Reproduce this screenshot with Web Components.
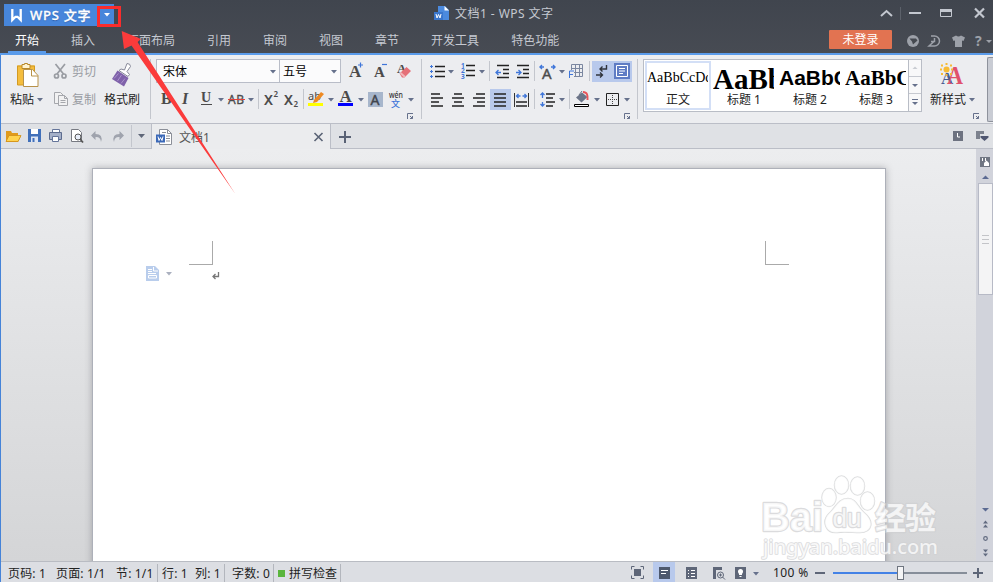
<!DOCTYPE html>
<html lang="zh-CN">
<head>
<meta charset="utf-8">
<title>文档1 - WPS 文字</title>
<style>
    body {
        margin: 0;
        overflow: hidden;
        font: 12px/16px "Noto Sans", "Noto Sans CJK SC", sans-serif;
        color: #222;
    }
</style>
</head>
<body>
<wps-app></wps-app>

<script>
// Every icon is drawn in a cell, most of them 24px high with the middle at y = 12
const A = 'font-family="Liberation Serif" fill="#4b4b4b"';
const lines = (list) => `<path stroke="#222" stroke-width="1.5" fill="none" d="${list.map(([x, y, w]) => `M${x} ${y}h${w}`).join('')}"/>`;

const icons = {
    none: '',
    caret: '<path d="M0 11h6l-3 3.4z" fill="#66718c"/>',
    launcher: '<path d="M.5 6V.5H6M3 5.500h2.500V3M3 3l2.500 2.500" fill="none" stroke="#66718c"/>',
    logo: '<path d="M1.300 0v11l3.200-3.200h2L9.700 11V0" fill="none" stroke="#fff" stroke-width="2.3"/>',
    doc: '<path d="M4 0h7l4 4v10H4z" fill="#4b8ade"/><path d="M10.500 0v4.500H15z" fill="#fff"/><path d="M0 6h9v8H0z" fill="#3a76cc"/><path d="M2 8l1 4 1.500-3.500L6 12l1-4" fill="none" stroke="#fff"/>',
    // window buttons
    fold: '<path d="M1 16l5.500-5 5.500 5" fill="none" stroke="#c3c7cf" stroke-width="2"/>',
    minimize: '<path d="M0 13h12" stroke="#c3c7cf" stroke-width="2"/>',
    restore: '<path d="M.5 9.500h11v7H.500z" fill="none" stroke="#c3c7cf"/><path d="M0 10.500h12" stroke="#c3c7cf" stroke-width="3"/>',
    close: '<path d="M1 8.500l9 9M10 8.500l-9 9" stroke="#c3c7cf" stroke-width="2.2"/>',
    globe: '<circle cx="6" cy="12" r="6" fill="#9da1a9"/><path d="M2.500 9.500h6.500l1.500 2-4.500 4-1-3z" fill="#454950"/>',
    swirl: '<path d="M3 7h3.500a5 5 0 0 1 0 10H1l5.500-5M6.500 9v3.500H3" fill="none" stroke="#9da1a9" stroke-width="1.500"/>',
    shirt: '<path d="M4 6.500q2.500 2 5 0l4 2-1.500 3.500-1.500-.5v6.500H3v-6.500L1.500 12 0 8.500z" fill="#9da1a9"/>',
    help: '<text x="0" y="16.500" font-size="14" font-weight="bold" fill="#9da1a9">?</text>',
    // clipboard
    paste: '<path d="M0 2.500h18V22H0z" fill="#f4bd3e"/><path d="M.5 3h17v19H.500z" fill="none" stroke="#d39a22"/><path d="M5 1.500h2.500V.500h3v1H13v4H5z" fill="#fff3cf" stroke="#b7882a"/><path d="M6.500 6.500h9l5.500 6v11H6.500z" fill="#fff" stroke="#b8924a"/><path d="M14.500 6.500v6.500H21" fill="none" stroke="#b8924a"/>',
    cut: '<g fill="none" stroke="#999ca2" stroke-width="1.700"><path d="M2.500 5l8 10M12 5l-8 10"/><circle cx="3.500" cy="17" r="2"/><circle cx="11" cy="17" r="2"/></g>',
    copy: '<g fill="#f1f1f2" stroke="#a5a7ac"><path d="M1.500 5.500h6l3 3v8h-9z"/><path d="M5.500 8.500h6l3 3v7h-9z"/><path d="M7.500 13.500h5M7.500 15.500h5M11.500 8.500v3h3" fill="none"/></g>',
    painter: '<path d="M15 .5q3.500 0 3.500 3L15 8.500l2.500 3-1.500 2L7 7.500l2-1.500 3.500 1z" fill="#fff" stroke="#888a9a"/><path d="M5.500 7.500l11 7.500-4.500 8.500L0 16z" fill="#7f62aa"/><path d="M2 15.500l4.500-5M5.500 18l4-6M9 20.500l4-5" stroke="#aa91cc"/>',
    // font
    grow: `<text x="0" y="18" font-size="17" font-weight="bold" ${A}>A</text><path d="M9 6h5M11.500 3.500v5" stroke="#3f76d9" stroke-width="1.200"/>`,
    shrink: `<text x="0" y="18" font-size="15" font-weight="bold" ${A}>A</text><path d="M8 5.500h5" stroke="#3f76d9" stroke-width="1.200"/>`,
    eraser: `<text x="0" y="13.500" font-size="13" font-weight="bold" ${A}>A</text><path d="M2.500 14.500l7-6.500 4.500 4-6.500 6.500H5z" fill="#e57078"/><path d="M3.500 14l4.500 4" stroke="#f2b6ba" stroke-width="2"/>`,
    bold: `<text x="0" y="17" font-size="16" font-weight="bold" ${A}>B</text>`,
    italic: `<text x="1" y="17" font-size="16" font-weight="bold" font-style="italic" ${A}>I</text>`,
    underline: `<text x="0" y="15" font-size="14" font-weight="bold" ${A}>U</text><path d="M0 17.500h11" stroke="#4b4b4b"/>`,
    strike: '<text x="0" y="17" font-size="12" fill="#4b4b4b" stroke="#4b4b4b" stroke-width=".3" textLength="16">AB</text><path d="M0 12.500h17" stroke="#e2413c"/>',
    sup: '<text x="0" y="17.500" font-size="14" font-weight="600" fill="#4b4b4b">X</text><text x="9.500" y="10" font-size="8" font-weight="600" fill="#4b4b4b">2</text>',
    sub: '<text x="0" y="17.500" font-size="14" font-weight="600" fill="#4b4b4b">X</text><text x="9.500" y="20" font-size="8" font-weight="600" fill="#4b4b4b">2</text>',
    marker: '<text x="0" y="13" font-size="11" fill="#4b4b4b">ab</text><path d="M6 13l7-8 3 2-7 8-4 1z" fill="#ee8a22"/><path d="M0 16h15v3H0z" fill="#ff0"/>',
    color: `<text x="1.500" y="14.500" font-size="17" font-weight="bold" ${A}>A</text><path d="M0 16h15v3H0z" fill="#00f"/>`,
    shade: '<path d="M0 5h15v15H0z" fill="#a7b6cc"/><text x="2.500" y="18" font-size="14" fill="#40444c" stroke="#40444c" stroke-width=".4">A</text>',
    pinyin: '<text x="0" y="10.500" font-size="8" font-weight="500" fill="#333" textLength="14" lengthAdjust="spacingAndGlyphs">wén</text><text x="2" y="20" font-size="9" font-weight="500" fill="#3f76d9">文</text>',
    // paragraph
    bullets: lines([[5, 7.500, 10], [5, 12.500, 10], [5, 17.500, 10]]) + '<path d="M0 7.500h3M1.500 6v3M0 12.500h3M1.500 11v3M0 17.500h3M1.500 16v3" stroke="#3f76d9"/>',
    numbers: lines([[5, 6.500, 9], [5, 11.500, 9], [5, 16.500, 9]]) + '<g font-size="6.500" font-weight="bold" fill="#3f76d9"><text y="8.500">1</text><text y="14">2</text><text y="19.500">3</text></g>',
    outdent: lines([[1, 6.500, 12], [7, 10.500, 6], [7, 14.500, 6], [1, 18.500, 12]]) + '<path d="M0 13.500h5M2.500 11L0 13.500 2.500 16" fill="none" stroke="#3f76d9" stroke-width="1.300"/>',
    indent: lines([[1, 6.500, 12], [7, 10.500, 6], [7, 14.500, 6], [1, 18.500, 12]]) + '<path d="M0 13.500h5M2.500 11L5 13.500 2.500 16" fill="none" stroke="#3f76d9" stroke-width="1.300"/>',
    scaleText: '<text x="2" y="20" font-size="15" fill="#4b4b4b" stroke="#4b4b4b" stroke-width=".4">A</text><path d="M0 8h4M2 6L0 8l2 2M11 8h4M13 6l2 2-2 2" fill="none" stroke="#3f76d9" stroke-width="1.400"/>',
    tableF: '<path d="M2.500 5.500h11v12h-11zM2.500 9.500h11M2.500 13.500h11M6.500 5v13M10.500 5v13" fill="none" stroke="#7b87a0"/><path d="M0 11h5v9H0z" fill="#ecedf0"/><path d="M.500 19v-7H5M0 15.500h4" fill="none" stroke="#3f76d9"/>',
    marks: '<path d="M14.500 6v4H8M10.500 7.500L8 10l2.500 2.500M4 16h6M8 13.500l2.500 2.500L8 18.500" fill="none" stroke="#30343c" stroke-width="1.400"/>',
    layout: '<path d="M3 4h16v16H3z" fill="#5f7cc4"/><path d="M5.500 6.500h11v11h-11z" fill="none" stroke="#fff"/><path d="M8 9.500h6M8 12h6M8 14.500h4" stroke="#fff"/>',
    left: lines([[0, 7, 9], [0, 11, 12], [0, 15, 8], [0, 19, 12]]),
    center: lines([[2, 7, 8], [0, 11, 12], [2, 15, 8], [0, 19, 12]]),
    right: lines([[3, 7, 9], [0, 11, 12], [4, 15, 8], [0, 19, 12]]),
    justify: lines([[4, 7, 12], [4, 11, 12], [4, 15, 12], [4, 19, 12]]),
    distribute: lines([[2, 15, 11], [2, 19, 11]]) + '<path d="M.500 6v14M14.500 6v14" stroke="#333"/><path d="M2.500 9h4M4.500 7L2.500 9l2 2M8.500 9h4M10.500 7l2 2-2 2" fill="none" stroke="#3f76d9" stroke-width="1.300"/>',
    spacing: lines([[6, 7, 9], [6, 11, 7], [6, 15, 9], [6, 19, 7]]) + '<path d="M2.500 6v5M.500 8l2-2 2 2M2.500 15v4M.500 17l2 2 2-2" fill="none" stroke="#3f76d9" stroke-width="1.300"/>',
    fill: '<path d="M8 5.500l5.500 4.500-6 5.500L2 10.500z" fill="#6b7488"/><path d="M5 8l3-4" stroke="#6b7488"/><path d="M9 5c4 0 5 3 4.500 8" fill="none" stroke="#e8545a" stroke-width="2"/><path d="M.500 17.500h14v2H.500z" fill="#fff" stroke="#000"/>',
    border: '<path d="M.500 6.500h12v12H.500z" fill="none" stroke="#222"/><path d="M6.500 8v10M2 12.500h10" stroke="#444" stroke-dasharray="1 1"/>',
    newStyle: '<text x="1" y="20.500" font-size="17" font-weight="bold" fill="#4a5e92" font-family="Liberation Serif">A</text><text x="7" y="20.500" font-size="25" font-weight="bold" fill="#e0526c" font-family="Liberation Serif" textLength="16" lengthAdjust="spacingAndGlyphs">A</text><g fill="#f7bb35"><circle cx="6.500" cy="6.500" r="3"/><path d="M5.500 0h2v2h-2zM5.500 11h2v2h-2zM0 5.500h2v2H0zM11 5.500h2v2h-2zM1 1.500h2v2H1zM10 1.500h2v2h-2zM1 10h2v2H1zM10 10h2v2h-2z"/></g>',
    scrollUp: '<path d="M3.500 9h5L6 6.500z" fill="#c9ccd2"/>',
    scrollDown: '<path d="M3 7h6L6 10z" fill="#66718c"/>',
    scrollMore: '<path d="M3 5.500h6" stroke="#66718c"/><path d="M3 8h6l-3 3z" fill="#66718c"/>',
    // quick access bar
    open: '<path d="M0 7h5l1 2h6v3h3l-3 6H0z" fill="#e09a1c"/><path d="M3 11.500h12L12 17.500H0z" fill="#ffd34f" stroke="#d08f18" stroke-width=".8"/>',
    save: '<path d="M0 5h13v13H0z" fill="#4170ba"/><path d="M3 5h7v5H3z" fill="#fff"/><path d="M3 12.500h7V18H3z" fill="#dfe6f4"/><path d="M4.500 14h2v4h-2z" fill="#4170ba"/>',
    print: '<path d="M3.500 5.500h7v3h-7z" fill="#fff" stroke="#65759a"/><path d="M.500 8.500h12v7H.500z" fill="#a5b0c8" stroke="#5d6c8e"/><path d="M3.500 12.500h6v5h-6z" fill="#fff" stroke="#65759a"/>',
    preview: '<path d="M.500 5.500h7l3 3v9H.500z" fill="#fff" stroke="#777a82"/><circle cx="7" cy="13" r="3" fill="#e8eefa" stroke="#555"/><path d="M9 15l3 3.500" stroke="#555" stroke-width="1.800"/>',
    undo: '<path d="M4.500 7L0 11.500 4.500 16v-3q5-.5 5.500 5 2.500-8-5.500-8z" fill="#9fa3ad"/>',
    redo: '<path d="M6.500 7L11 11.500 6.500 16v-3q-5-.5-5.500 5-2.500-8 5.500-8z" fill="#9fa3ad"/>',
    word: '<path d="M3.500.500h8l4 4v11h-12z" fill="#fff" stroke="#8b8f98"/><path d="M11.500.500v4h4M10 7h4M10 9.500h4M10 12h4M6 3.500h4" fill="none" stroke="#8b8f98"/><path d="M0 5.500h9v8H0z" fill="#3b69b8"/><path d="M2 7.500l1 4 1.500-3 1.500 3 1-4" fill="none" stroke="#fff"/>',
    closeTab: '<path d="M.500 8l8 8M8.500 8l-8 8" stroke="#596275" stroke-width="1.600"/>',
    plus: '<path d="M0 12h12M6 6v12" stroke="#596275" stroke-width="2"/>',
    clock: '<path d="M0 7h10v10H0z" fill="#6d7280"/><path d="M4.500 9v4H7" fill="none" stroke="#fff"/>',
    tabList: '<path d="M0 7h8v3H4v5H0z" fill="#7c818d"/><path d="M4.500 12h8v1.500l-4 3.500-4-3.500z" fill="#4f5670"/>',
    // scroll bar
    ruler: '<path d="M0 0h10v10H0z" fill="#707683"/><path d="M2.500 1v3M5.500 1v3" stroke="#fff"/><path d="M4 6l2.500-2.500L9 6v3H4z" fill="#fff"/>',
    up: '<path d="M0 4h7L3.500 .5z" fill="#5b6a92"/>',
    down: '<path d="M0 0h7L3.500 3.500z" fill="#5b6a92"/>',
    pageUp: '<path d="M1 3.500h5l-2.500-3zM1 7.500h5l-2.500-3z" fill="#626b80"/>',
    pageDown: '<path d="M1 .500h5l-2.500 3zM1 4.500h5l-2.500 3z" fill="#626b80"/>',
    ring: '<circle cx="3.500" cy="3.500" r="1.800" fill="none" stroke="#626b80" stroke-width="1.200"/>',
    // status bar
    full: '<path d="M3 8h7v7H3z" fill="#5e6678"/><path d="M.500 8.500v-3h3M9.500 5.500h3v3M12.500 14.500v3h-3M3.500 17.500h-3v-3" fill="none" stroke="#5e6678"/>',
    pageView: '<path d="M6 6h11v12H6z" fill="#4e596e"/><path d="M8 9.500h7M8 12.500h5" stroke="#fff"/>',
    outline: '<path d="M0 6h11v12H0z" fill="#5e6678"/><path d="M2 9.500h1M5 9.500h4M2 12.500h1M5 12.500h4M2 15.500h1M5 15.500h4" stroke="#fff"/>',
    web: '<path d="M0 6h9v3H0zM0 9h3v9H0z" fill="#5e6678"/><circle cx="7.500" cy="14" r="3" fill="none" stroke="#5e6678"/><path d="M6 14h3M7.500 12.500v3M9.500 16l2.500 2.500" stroke="#5e6678"/>',
    bulb: '<path d="M0 6h11v12H0z" fill="#5e6678"/><circle cx="5.500" cy="10.500" r="2.500" fill="#fff"/><path d="M4 12h3v2H4zM4.500 15h2v1h-2z" fill="#fff"/>',
    minus: '<path d="M0 12h10" stroke="#5e6678" stroke-width="2"/>',
    zoomIn: '<path d="M0 12h10M5 7v10" stroke="#5e6678" stroke-width="2"/>',
    // page
    paragraphTool: '<path d="M0 0h9l4 4v11H0z" fill="#b9cdec"/><path d="M7.500 1v4H12M2 3.500h4M2 5.500h4M2 7.500h8M2.500 9.500h8v2.500h-8z" fill="none" stroke="#fff"/>',
    enter: '<path d="M6.500 0v4.500H1M3.500 2L1 4.500 3.500 7" fill="none" stroke="#777" stroke-width="1.300"/>'
};

class WpsElement extends HTMLElement {
    constructor() {
        super();
        this.attachShadow({ mode: 'open' });
    }
    connectedCallback() {
        const template = document.createElement('template');
        template.innerHTML = `<style>${this.styles()}</style>${this.markup()}`;
        this.shadowRoot.replaceChildren(template.content.cloneNode(true));
    }
    styles() { return ''; }
    markup() { return '<slot></slot>'; }
}

// name = drawing, w and h = size of the cell
class WpsIcon extends WpsElement {
    styles() {
        return `:host { display: block; flex: none; } svg { display: block; overflow: visible; }`;
    }
    markup() {
        const w = this.getAttribute('w') || 12;
        const h = this.getAttribute('h') || 24;
        return `<svg width="${w}" height="${h}" viewBox="0 0 ${w} ${h}">${icons[this.getAttribute('name')]}</svg>`;
    }
}

// vertical line, w is the whole cell with the line on its left
class WpsSeparator extends WpsElement {
    styles() {
        return `:host { display: block; flex: none; width: ${this.getAttribute('w') || 1}px; height: ${this.getAttribute('h') || 20}px; }
            i { display: block; width: 1px; height: 100%; background: var(--line, #c3c6cd); }`;
    }
    markup() { return '<i></i>'; }
}

class WpsCombo extends WpsElement {
    styles() {
        return `:host { display: flex; flex: none; box-sizing: border-box; height: 24px; align-items: center;
                border: 1px solid #b9bdc8; background: #fbfbfc; padding: 0 3px 0 6px; justify-content: space-between; color: #000; }
            span { padding-top: 2px; }`;
    }
    markup() { return '<span><slot></slot></span><wps-icon name="caret" w="6"></wps-icon>'; }
}

class WpsMenuTab extends WpsElement {
    styles() {
        return `:host { display: flex; justify-content: center; padding: 0 16px; height: 26px; line-height: 28px; color: #c5c9d1; }
            :host([active]) { color: #fff; }
            div { height: 24px; }
            :host([active]) div { padding: 0 7px; margin: 0 -7px; border-bottom: 2px solid #5a9bea; }`;
    }
    markup() { return '<div><slot></slot></div>'; }
}

class WpsStyleCard extends WpsElement {
    styles() {
        return `:host { display: flex; flex-direction: column; box-sizing: border-box; width: 66px; height: 49px; border: 2px solid transparent;
                overflow: hidden; text-align: center; color: #222; }
            :host([active]) { border-color: #d3dff6; }
            .sample { height: 29px; line-height: 30px; text-align: left; white-space: nowrap; overflow: hidden; color: #000; width: 61px; }
            .name { line-height: 16px; }`;
    }
    markup() {
        return `<div class="sample" style="${this.getAttribute('face')}">${this.getAttribute('sample')}</div><div class="name"><slot></slot></div>`;
    }
}

class WpsTitleBar extends WpsElement {
    styles() {
        return `:host { display: block; height: 53px; background: linear-gradient(#40454e, #474b53); border-bottom: 2px solid #5a9bea; }
            .row { display: flex; height: 27px; color: #c5c9d1; }
            .logo { display: flex; align-items: center; width: 110px; height: 22px; margin: 4px 320px 0 4px; background: #4786db; color: #fff;
                font-size: 13px; font-weight: 500; box-sizing: border-box; padding-left: 7px; }
            .logo span { width: 72px; padding-left: 8px; letter-spacing: .75px; white-space: nowrap; text-shadow: 0 1px 1px #2a5ca8; -webkit-text-stroke: .3px #fff; }
            .doc { margin-top: 6px; width: 21px; }
            .title { line-height: 28px; letter-spacing: .45px; }
            .buttons { display: flex; margin-left: auto; }
            nav { display: flex; height: 26px; margin-left: -1px; }
            .user { display: flex; margin-left: auto; }
            .login { width: 63px; height: 19px; margin: 3px 15px 0 0; background: #e27351; color: #fff; text-align: center; line-height: 20px; border-radius: 1px; }
            .user wps-icon { margin-top: 2px; }`;
    }
    markup() {
        const tabs = ['开始', '插入', '页面布局', '引用', '审阅', '视图', '章节', '开发工具', '特色功能'];
        return `<div class="row">
                <div class="logo"><wps-icon name="logo" w="11" h="12"></wps-icon><span>WPS 文字</span><svg width="7" height="4" style="margin-left:2px"><path d="M0 0h6L3 3.500z" fill="#fff"/></svg></div>
                <wps-icon class="doc" name="doc" w="15" h="15"></wps-icon>
                <div class="title">文档1 - WPS 文字</div>
                <div class="buttons">
                    <wps-icon name="fold" w="20"></wps-icon>
                    <wps-separator w="9" h="13" style="margin-top:7px;--line:#5c616a"></wps-separator>
                    <wps-icon name="minimize" w="31"></wps-icon>
                    <wps-icon name="restore" w="34"></wps-icon>
                    <wps-icon name="close" w="19"></wps-icon>
                </div>
            </div>
            <nav>
                ${tabs.map((t, i) => `<wps-menu-tab${i ? '' : ' active'}>${t}</wps-menu-tab>`).join('')}
                <div class="user">
                    <div class="login">未登录</div>
                    <wps-icon name="globe" w="21"></wps-icon>
                    <wps-icon name="swirl" w="24"></wps-icon>
                    <wps-icon name="shirt" w="23"></wps-icon>
                    <wps-icon name="help" w="11"></wps-icon>
                    <svg width="7" height="4" style="margin-top:13px"><path d="M0 0h6L3 3z" fill="#9da1a9"/></svg>
                </div>
            </nav>`;
    }
}

// "name:width name:width ..." to a line of icon cells, | is a separator
const cells = (text) => text.split(' ').map((item) => {
    const [name, w] = item.split(':');
    return name === '|' ? `<wps-separator w="${w}"></wps-separator>` : `<wps-icon name="${name}" w="${w}"></wps-icon>`;
}).join('');

class WpsRibbon extends WpsElement {
    styles() {
        return `:host { display: flex; height: 68px; background: #ecedf0; border-bottom: 1px solid #bbbec7; }
            .group { display: flex; flex-direction: column; box-sizing: border-box; padding-top: 4px; flex: none; }
            .row { display: flex; align-items: center; height: 24px; margin-bottom: 4px; }
            .foot { display: flex; justify-content: flex-end; margin-top: -2px; }
            .big { display: flex; flex-direction: column; }
            .big .pic { height: 28px; padding-top: 4px; box-sizing: border-box; }
            .label { display: flex; height: 24px; line-height: 26px; gap: 3px; }
            .dim { color: #999ca2; line-height: 26px; display: flex; height: 24px; margin-bottom: 4px; }
            .bar { margin-top: 4px; }
            .on { display: flex; background: #b8c9ec; height: 21px; align-items: center; }
            .gallery { display: flex; border: 1px solid #b9bdc6; background: #fff; height: 51px; padding-left: 1px; box-sizing: content-box; width: 276px; }
            .scroll { display: flex; flex-direction: column; width: 12px; margin-left: -1px; border-left: 1px solid #b9bdc6; background: #f8f8f9; z-index: 1; }
            .scroll wps-icon { border-bottom: 1px solid #c6c9d0; height: 16px; }
            .scroll wps-icon:last-child { border: 0; }
            .end { box-sizing: border-box; width: 6px; height: 65px; margin: 2px 0 0 auto; border: 1px solid #8e929c; border-right: 0; border-radius: 2px 0 0 2px; background: #c9ccd4; }`;
    }
    markup() {
        return `
            <div class="group" style="width:52px;padding-left:9px"><div class="big">
                <div class="pic" style="padding-left:7px"><wps-icon name="paste" w="22" h="25"></wps-icon></div>
                <div class="label">粘贴<wps-icon name="caret" w="6"></wps-icon></div>
            </div></div>
            <div class="group" style="width:50px">
                <div class="dim"><wps-icon name="cut" w="19"></wps-icon>剪切</div>
                <div class="dim"><wps-icon name="copy" w="19"></wps-icon>复制</div>
            </div>
            <div class="group" style="width:48px"><div class="big">
                <div class="pic" style="padding-left:9px"><wps-icon name="painter" w="21" h="24"></wps-icon></div>
                <div class="label" style="padding-left:1px">格式刷</div>
            </div></div>
            <wps-separator class="bar" w="4" h="60" style="margin-left:-1px;padding-right:1px"></wps-separator>
            <div class="group" style="width:266px">
                <div class="row" style="padding-left:1px">
                    <wps-combo style="width:124px">宋体</wps-combo>
                    <wps-combo style="width:62px;margin:0 8px 0 -1px;padding-left:3px">五号</wps-combo>
                    ${cells('grow:25 shrink:23 eraser:16')}
                </div>
                <div class="row" style="padding-left:6px">
                    ${cells('bold:20 italic:20 underline:17 caret:10 strike:20 caret:10 |:6 sup:20 sub:19 |:5 marker:20 caret:10 color:20 caret:10 shade:21 pinyin:19 caret:6')}
                </div>
                <div class="foot" style="padding-right:8px"><wps-icon name="launcher" w="6" h="6"></wps-icon></div>
            </div>
            <wps-separator class="bar" w="9" h="60"></wps-separator>
            <div class="group" style="width:207px">
                <div class="row">
                    ${cells('bullets:18 caret:13 numbers:18 caret:10 |:7 outdent:20 indent:18 |:6 scaleText:19 caret:10 tableF:20 |:3')}
                    <div class="on">${cells('marks:19 layout:21')}</div>
                </div>
                <div class="row" style="padding-left:1px">
                    ${cells('left:21 center:21 right:17')}
                    <div class="on">${cells('justify:21')}</div>
                    ${cells('none:3 distribute:20 |:6 spacing:19 caret:10 |:5 fill:20 caret:12 border:18 caret:6')}
                </div>
                <div class="foot" style="padding-right:7px"><wps-icon name="launcher" w="6" h="6"></wps-icon></div>
            </div>
            <wps-separator class="bar" w="6" h="60"></wps-separator>
            <div class="group" style="width:280px;">
                <div class="gallery">
                    <wps-style-card active style="margin-top:1px" sample="AaBbCcDd" face="font:14px/30px 'Liberation Serif'">正文</wps-style-card>
                    <wps-style-card style="margin-top:1px" sample="AaBb" face="font:bold 29px/33px 'Liberation Serif'">标题 1</wps-style-card>
                    <wps-style-card style="margin-top:1px" sample="AaBbC" face="font:bold 21px/29px 'Liberation Sans'">标题 2</wps-style-card>
                    <wps-style-card style="margin-top:1px" sample="AaBbCc" face="font:bold 21px/31px 'Liberation Serif'">标题 3</wps-style-card>
                    <div class="scroll">
                        <wps-icon name="scrollUp" w="12" h="16"></wps-icon>
                        <wps-icon name="scrollDown" w="12" h="16"></wps-icon>
                        <wps-icon name="scrollMore" w="12" h="16"></wps-icon>
                    </div>
                </div>
            </div>
            <div class="group" style="width:57px;padding-left:7px"><div class="big">
                <div class="pic" style="padding-left:10px"><wps-icon name="newStyle" w="22" h="22"></wps-icon></div>
                <div class="label">新样式<wps-icon name="caret" w="6"></wps-icon></div>
            </div>
            <div class="foot" style="padding:4px 1px 0 0"><wps-icon name="launcher" w="6" h="6"></wps-icon></div></div>
            <div class="end"></div>`;
    }
}

class WpsDocBar extends WpsElement {
    styles() {
        return `:host { display: flex; height: 25px; background: #dfe1e5; box-sizing: border-box; }
            .quick, .rest { display: flex; box-sizing: border-box; border-bottom: 1px solid #bbbec7; }
            .quick { width: 150px; padding-left: 5px; }
            .tab { display: flex; box-sizing: border-box; width: 180px; border: 1px solid #bbbec7; border-width: 0 1px; background: #ebecee; padding-left: 4px; line-height: 28px; color: #555; }
            .tab .word { margin-top: 5px; width: 23px; }
            .tab .x, .rest wps-icon { margin-top: 1px; }
            .rest { flex: 1; padding-left: 8px; }
            .list { display: flex; margin-left: auto; }
            .list wps-icon { margin-top: 0; }`;
    }
    markup() {
        return `<div class="quick">${cells('open:22 save:21 print:22 preview:20 undo:22 redo:18')}
                <wps-separator w="7" h="22" style="margin-top:1px"></wps-separator><svg width="8" height="5" style="margin-top:10px"><path d="M0 0h7L3.500 4z" fill="#5e6678"/></svg></div>
            <div class="tab"><wps-icon class="word" name="word" w="16" h="16"></wps-icon>文档1
                <wps-icon class="x" name="closeTab" w="9" style="margin-left:auto;margin-right:7px"></wps-icon></div>
            <div class="rest"><wps-icon name="plus" w="12"></wps-icon>
                <div class="list">${cells('clock:23 tabList:17')}</div></div>`;
    }
}

class WpsScrollBar extends WpsElement {
    styles() {
        return `:host { display: flex; flex-direction: column; box-sizing: border-box; width: 17px; background: #d1d3db; padding: 8px 0 4px 6px; }
            .ruler { margin: 0 0 8px -2px; }
            .thumb { display: flex; flex-direction: column; justify-content: center; align-items: center; gap: 3px; box-sizing: border-box; width: 15px;
                height: 112px; margin: 4px 0 auto -4px; border: 1px solid #b7bac6; background: #f4f4f5; }
            .thumb i { width: 7px; height: 1px; background: #c3c4c8; }`;
    }
    markup() {
        return `<wps-icon class="ruler" name="ruler" w="10" h="10"></wps-icon>
            <wps-icon name="up" w="7" h="4"></wps-icon>
            <div class="thumb"><i></i><i></i><i></i></div>
            <wps-icon name="down" w="7" h="12"></wps-icon>
            <wps-icon name="pageUp" w="7" h="15"></wps-icon>
            <wps-icon name="ring" w="7" h="14"></wps-icon>
            <wps-icon name="pageDown" w="7" h="8"></wps-icon>`;
    }
}

class WpsCanvas extends WpsElement {
    styles() {
        return `:host { display: flex; height: 412px; background: linear-gradient(#ecedef, #d4d5d7); overflow: hidden; }
            .desk { flex: 1; padding: 19px 0 0 91px; overflow: hidden; }
            .page { box-sizing: border-box; width: 794px; height: 420px; border: 1px solid #adb0b9; background: #fff; box-shadow: 0 0 7px rgba(60, 60, 70, .35); padding: 72px 96px 0 53px; }
            .marks { display: flex; justify-content: space-between; padding-left: 43px; }
            .marks i { box-sizing: border-box; width: 24px; height: 24px; border: 1px solid #aaa; border-width: 0 1px 1px 0; }
            .marks i + i { border-width: 0 0 1px 1px; }
            .line { display: flex; }
            .line wps-icon:first-child { margin: 1px 7px 0 0; }`;
    }
    markup() {
        return `<div class="desk"><div class="page">
                <div class="marks"><i></i><i></i></div>
                <div class="line"><wps-icon name="paragraphTool" w="13" h="15"></wps-icon>
                    <wps-icon name="caret" w="6" style="opacity:.55;margin-top:-4px"></wps-icon>
                    <wps-icon name="enter" w="8" h="8" style="margin:7px 0 0 40px"></wps-icon></div>
            </div></div>
            <wps-scroll-bar></wps-scroll-bar>`;
    }
}

class WpsStatusBar extends WpsElement {
    styles() {
        return `:host { display: flex; height: 20px; flex: none; border-top: 1px solid #b9bcc3; background: #dcdee3; line-height: 24px; color: #222; letter-spacing: .15px; --line: #b3b6bd; }
            span { flex: none; white-space: nowrap; box-sizing: border-box; }
            wps-separator { margin-top: 2px; }
            .dot { width: 7px; height: 7px; margin: 8px 4px 0 0; background: #5ab53c; }
            .view { display: flex; margin-left: auto; }
            .view wps-icon { margin-top: -1px; }
            .view span { line-height: 22px; }
            .on { background: #b8c9ec; width: 22px; margin-right: 11px; }
            .slider { display: flex; align-items: center; width: 134px; margin-right: 6px; margin-top: 1px; height: 20px; }
            .done { width: 64px; height: 2px; background: #4482e6; }
            .knob { box-sizing: border-box; width: 7px; height: 14px; border: 1px solid #6f7580; background: #f5f5f6; }
            .left { flex: 1; height: 2px; background: #868e99; }`;
    }
    markup() {
        return `<span style="width:55px;padding-left:7px">页码: 1</span>
            <span style="width:60px">页面: 1/1</span><span style="width:41px">节: 1/1</span>
            <wps-separator w="5" h="18"></wps-separator>
            <span style="width:33px">行: 1</span><span style="width:29px">列: 1</span>
            <wps-separator w="8" h="18"></wps-separator><span style="width:41px">字数: 0</span>
            <wps-separator w="5" h="18"></wps-separator><i class="dot"></i><span style="width:51px;letter-spacing:0">拼写检查</span>
            <wps-separator w="1" h="18"></wps-separator>
            <div class="view">
                <wps-icon name="full" w="22"></wps-icon>
                <div class="on"><wps-icon name="pageView" w="22"></wps-icon></div>
                ${cells('outline:27 web:22 bulb:18 caret:20')}
                <span style="width:42px;letter-spacing:.4px">100 %</span>
                <wps-icon name="minus" w="18"></wps-icon>
                <div class="slider"><div class="done"></div><div class="knob"></div><div class="left"></div></div>
                <wps-icon name="zoomIn" w="20"></wps-icon>
            </div>`;
    }
}

// red arrow and frame over the button, and the site mark in the corner
class WpsOverlay extends WpsElement {
    styles() {
        return `:host { position: absolute; left: 0; top: 0; width: 993px; height: 582px; pointer-events: none; } svg { display: block; }`;
    }
    markup() {
        return `<svg width="993" height="582" viewBox="0 0 993 582">
            <g fill="#fff" fill-opacity=".75" stroke="#cfd0d2" stroke-opacity=".75" stroke-width="2.400" paint-order="stroke" stroke-linejoin="round" font-weight="bold">
                <text x="761" y="531" font-size="41" font-family="Liberation Sans" textLength="62" lengthAdjust="spacingAndGlyphs">Bai</text>
                <g stroke-width="1.500">
                    <ellipse cx="829" cy="497.500" rx="7" ry="9"/><ellipse cx="841.500" cy="485" rx="7" ry="9"/>
                    <ellipse cx="857.500" cy="486" rx="7" ry="9"/><ellipse cx="867.500" cy="501" rx="7" ry="9"/>
                    <path d="M848 498.500c8 0 10 9 16 14 11 9 8 20-4 20-7 0-17-1-23 0-11 1-16-11-8-19 7-6 9-15 19-15z"/>
                </g>
                <text x="832.500" y="527" font-size="26" font-weight="normal" font-family="Liberation Sans" textLength="29" lengthAdjust="spacingAndGlyphs">du</text>
                <text x="875" y="529" font-size="31" font-family="Noto Sans CJK SC" textLength="61">经验</text>
                <text x="763" y="554" font-size="20" font-weight="500" stroke-width="1.600" font-family="Noto Sans" textLength="175">jingyan.baidu.com</text>
            </g>
            <path d="M98.500 7.500h21v18h-21z" fill="none" stroke="#fa2c2c" stroke-width="3"/>
            <path d="M121.700 31l2.300 18 7.500-3.500L235 193.500 137.500 42l3.500-3z" fill="#fb3b3b"/>
        </svg>`;
    }
}

class WpsApp extends WpsElement {
    styles() {
        return `:host { position: relative; display: flex; flex-direction: column; width: 993px; height: 582px; overflow: hidden; }
            main { display: flex; flex-direction: column; border-left: 1px solid #4583d8; }`;
    }
    markup() {
        return `<wps-title-bar></wps-title-bar>
            <main><wps-ribbon></wps-ribbon><wps-doc-bar></wps-doc-bar><wps-canvas></wps-canvas><wps-status-bar></wps-status-bar></main>
            <wps-overlay></wps-overlay>`;
    }
}

customElements.define('wps-icon', WpsIcon);
customElements.define('wps-separator', WpsSeparator);
customElements.define('wps-combo', WpsCombo);
customElements.define('wps-menu-tab', WpsMenuTab);
customElements.define('wps-style-card', WpsStyleCard);
customElements.define('wps-title-bar', WpsTitleBar);
customElements.define('wps-ribbon', WpsRibbon);
customElements.define('wps-doc-bar', WpsDocBar);
customElements.define('wps-scroll-bar', WpsScrollBar);
customElements.define('wps-canvas', WpsCanvas);
customElements.define('wps-status-bar', WpsStatusBar);
customElements.define('wps-overlay', WpsOverlay);
customElements.define('wps-app', WpsApp);
</script>
</body>
</html>
